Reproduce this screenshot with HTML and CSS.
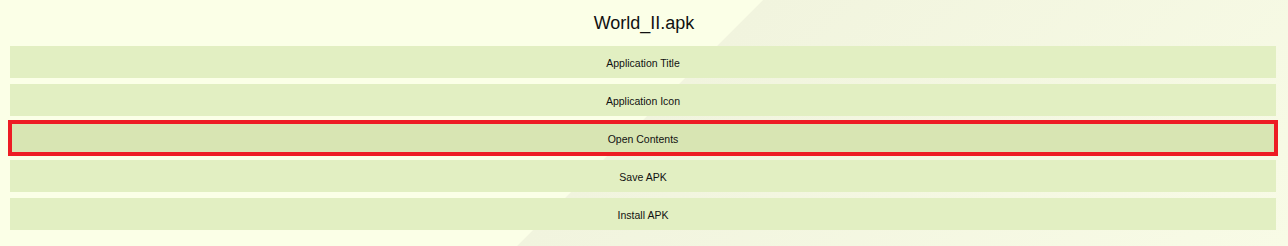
FILE: index.html
```html
<!DOCTYPE html>
<html lang="en">
<head>
  <meta charset="UTF-8">
  <meta name="viewport" content="width=device-width, initial-scale=1.0">
  <title>APK Editor</title>
  <link rel="stylesheet" href="styles.css">
</head>
<body>
<div id="apk-panel">
  <div id="file-name">World_II.apk</div>

  <div id="action-list">
    <div class="action-button">Application Title</div>
    <div class="action-button">Application Icon</div>
    <div class="action-button selected">Open Contents</div>
    <div class="action-button">Save APK</div>
    <div class="action-button">Install APK</div>
  </div>
</div>
</body>
</html>
```

FILE: styles.css
```css
  body {
    font-family: "Liberation Sans", Arial, sans-serif;
    color: #111111;
    margin: 0px;
  }

  #apk-panel {
    height: 100vh;
    box-sizing: border-box;
    background: linear-gradient(135deg, #fbffe7 0%, #fbffe7 49.7%, #f1f4de 49.8%, #f8fbe6 100%);
  }

  #file-name {
    height: 46px;
    display: flex;
    align-items: center;
    justify-content: center;
    font-size: 18px;
  }

  #action-list {
    display: flex;
    flex-direction: column;
    gap: 6px;
    padding: 0 12px 0 10px;
  }

  .action-button {
    height: 32px;
    box-sizing: border-box;
    padding-top: 2px;
    display: flex;
    align-items: center;
    justify-content: center;
    background-color: #e2efc2;
    font-size: 10.5px;
    cursor: pointer;
  }

  .action-button.selected {
    background-color: #d8e5b3;
    outline: 4px solid #ed1c24;
    outline-offset: -2px;
  }
```
